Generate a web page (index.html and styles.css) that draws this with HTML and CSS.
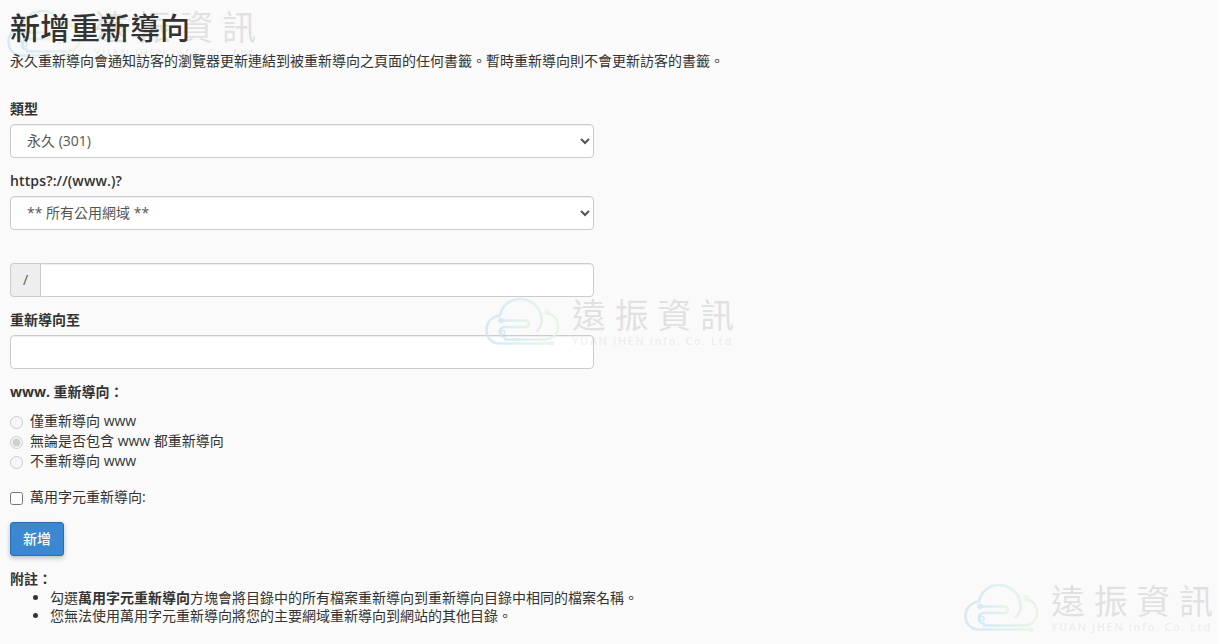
FILE: index.html
```html
<!DOCTYPE html>
<html lang="zh-Hant">
<head>
<meta charset="utf-8">
<title>新增重新導向</title>
<link rel="stylesheet" href="styles.css">
</head>
<body>
<svg class="defs" width="0" height="0" aria-hidden="true">
  <defs>
    <linearGradient id="cloudGrad" x1="0" y1="0" x2="1" y2="0">
      <stop offset="0" stop-color="#d3e8f6"/>
      <stop offset="0.55" stop-color="#dcf0f0"/>
      <stop offset="1" stop-color="#e8f4e3"/>
    </linearGradient>
    <symbol id="cloud" viewBox="0 0 80 56">
      <g fill="none" stroke="url(#cloudGrad)" stroke-width="2.6" stroke-linecap="round" stroke-linejoin="round">
        <path d="M66 47.500H15C6 47.500 1.500 41 1.500 34C1.500 26 7 20.500 15 19.500C17 9 26 2.500 36 3C46 3.500 55 11 56.500 21C57.500 26 56 31 52 35"/>
        <path d="M63 17C69 19 73 24 73 30C73 38 68 43 60 43.500H20"/>
        <path d="M16 24.500H40C45 24.500 45 31 40 31H20C13 31 13 41.500 20 41.500"/>
        <path d="M19 36.500H42"/>
      </g>
      <circle cx="67" cy="47.500" r="2.400" fill="#e8f4e3"/>
      <circle cx="62" cy="16" r="2" fill="none" stroke="#e8f4e3" stroke-width="1.500"/>
      <circle cx="16" cy="24.500" r="2" fill="none" stroke="#d3e8f6" stroke-width="1.500"/>
      <circle cx="18" cy="36.500" r="2" fill="none" stroke="#d3e8f6" stroke-width="1.500"/>
    </symbol>
  </defs>
</svg>

<main class="page">
  <h1 class="title">新增重新導向</h1>
  <p class="intro">永久重新導向會通知訪客的瀏覽器更新連結到被重新導向之頁面的任何書籤。暫時重新導向則不會更新訪客的書籤。</p>

  <form class="form">
    <div class="group">
      <label class="label" for="type">類型</label>
      <select class="control control-select" id="type"><option>永久 (301)</option><option>暫時 (302)</option></select>
    </div>
    <div class="group">
      <label class="label label-regular" for="domain">https?://(www.)?</label>
      <select class="control control-select" id="domain"><option>** 所有公用網域 **</option></select>
    </div>
    <div class="group group-path">
      <div class="input-group">
        <span class="addon">/</span>
        <input class="control control-joined" type="text" aria-label="路徑">
      </div>
    </div>
    <div class="group">
      <label class="label" for="target">重新導向至</label>
      <input class="control" id="target" type="text">
    </div>
    <div class="group-www">
      <div class="label">www. 重新導向：</div>
      <label class="option"><input type="radio" name="www" disabled>僅重新導向 www</label>
      <label class="option"><input type="radio" name="www" checked disabled>無論是否包含 www 都重新導向</label>
      <label class="option"><input type="radio" name="www" disabled>不重新導向 www</label>
    </div>
    <label class="option option-wild"><input type="checkbox">萬用字元重新導向:</label>
    <button class="btn" type="button">新增</button>
  </form>

  <div class="notes">
    <strong class="notes-head">附註：</strong>
    <ul class="notes-list">
      <li>勾選<strong>萬用字元重新導向</strong>方塊會將目錄中的所有檔案重新導向到重新導向目錄中相同的檔案名稱。</li>
      <li>您無法使用萬用字元重新導向將您的主要網域重新導向到網站的其他目錄。</li>
    </ul>
  </div>
</main>

<div class="wm wm-top"><svg class="wm-logo"><use href="#cloud"/></svg><div class="wm-text"><div class="wm-name"><span>遠</span><span>振</span><span>資</span><span>訊</span></div><div class="wm-en">YUAN JHEN Info. Co. Ltd</div></div></div>
<div class="wm wm-mid"><svg class="wm-logo"><use href="#cloud"/></svg><div class="wm-text"><div class="wm-name"><span>遠</span><span>振</span><span>資</span><span>訊</span></div><div class="wm-en">YUAN JHEN Info. Co. Ltd</div></div></div>
<div class="wm wm-end"><svg class="wm-logo"><use href="#cloud"/></svg><div class="wm-text"><div class="wm-name"><span>遠</span><span>振</span><span>資</span><span>訊</span></div><div class="wm-en">YUAN JHEN Info. Co. Ltd</div></div></div>
</body>
</html>
```

FILE: styles.css
```css
* { box-sizing: border-box; }

html, body { height: 100%; }

body {
  margin: 0;
  background: #fafafa;
  color: #333;
  font-family: "Open Sans", "Noto Sans CJK TC", sans-serif;
  font-size: 14px;
  line-height: 20px;
  overflow: hidden;
  position: relative;
}

.defs { position: absolute; }

.page { padding: 0 10px; }

.title {
  position: relative;
  z-index: 3;
  margin: 0;
  padding-top: 8px;
  font-size: 30px;
  line-height: 40px;
  font-weight: 500;
}

.intro { position: relative; z-index: 3; margin: 3px 0 0; line-height: 20px; height: 20px; }

.form { margin-top: 28px; width: 584px; }

.group { margin-bottom: 13px; }

.group-path { padding-top: 20px; }

.label {
  display: block;
  height: 20px;
  margin-bottom: 5px;
  font-weight: 700;
  font-size: 14px;
}

.label-regular { font-weight: 600; letter-spacing: .13px; }

.control {
  display: block;
  width: 100%;
  height: 34px;
  padding: 6px 12px;
  background: #fff;
  border: 1px solid #ccc;
  border-radius: 4px;
  box-shadow: inset 0 1px 1px rgba(0, 0, 0, .075);
  color: #555;
  font: inherit;
}

.control-select { padding: 5px 12px 7px; }

.input-group { display: flex; }

.addon {
  flex: 0 0 30px;
  height: 34px;
  border: 1px solid #ccc;
  border-right: 0;
  border-radius: 4px 0 0 4px;
  background: #eee;
  color: #555;
  text-align: center;
  line-height: 32px;
}

.control-joined { flex: 1; border-radius: 0 4px 4px 0; }

.group-www .label { margin-bottom: 9px; }

.option {
  display: flex;
  align-items: center;
  height: 20px;
  color: #333;
}

.option input {
  width: 13px;
  height: 13px;
  margin: 2px 7px 0 0;
  flex: none;
}

.option-wild { margin-top: 16px; }

.btn {
  display: block;
  margin-top: 15px;
  width: 54px;
  height: 34px;
  padding: 0;
  background: #3b87d0;
  border: 1px solid #2a6fb5;
  border-radius: 3px;
  box-shadow: 0 2px 5px rgba(0, 0, 0, .25);
  color: #fff;
  font: inherit;
  font-weight: 500;
}

.notes { margin-top: 13px; }

.notes-head { display: block; height: 20px; font-weight: 700; }

.notes-list { margin: 0; padding-left: 40px; line-height: 18px; }

.wm {
  position: absolute;
  display: flex;
  gap: 7px;
  opacity: .9;
  pointer-events: none;
  z-index: 2;
}

.wm-top { left: 7px; top: 8px; }
.wm-mid { left: 485px; top: 296px; }
.wm-end { left: 964px; top: 582px; }

.wm-logo { width: 80px; height: 56px; flex: none; }

.wm-text { width: 162px; }

.wm-name {
  display: flex;
  justify-content: space-between;
  font-family: "Noto Sans CJK TC", sans-serif;
  font-size: 34px;
  line-height: 36px;
  color: rgba(190, 190, 190, .45);
}

.wm-en {
  margin-top: 2px;
  font-family: "Open Sans", sans-serif;
  font-size: 11px;
  line-height: 14px;
  font-weight: 600;
  letter-spacing: 1.500px;
  color: rgba(190, 190, 190, .24);
  white-space: nowrap;
}
```
